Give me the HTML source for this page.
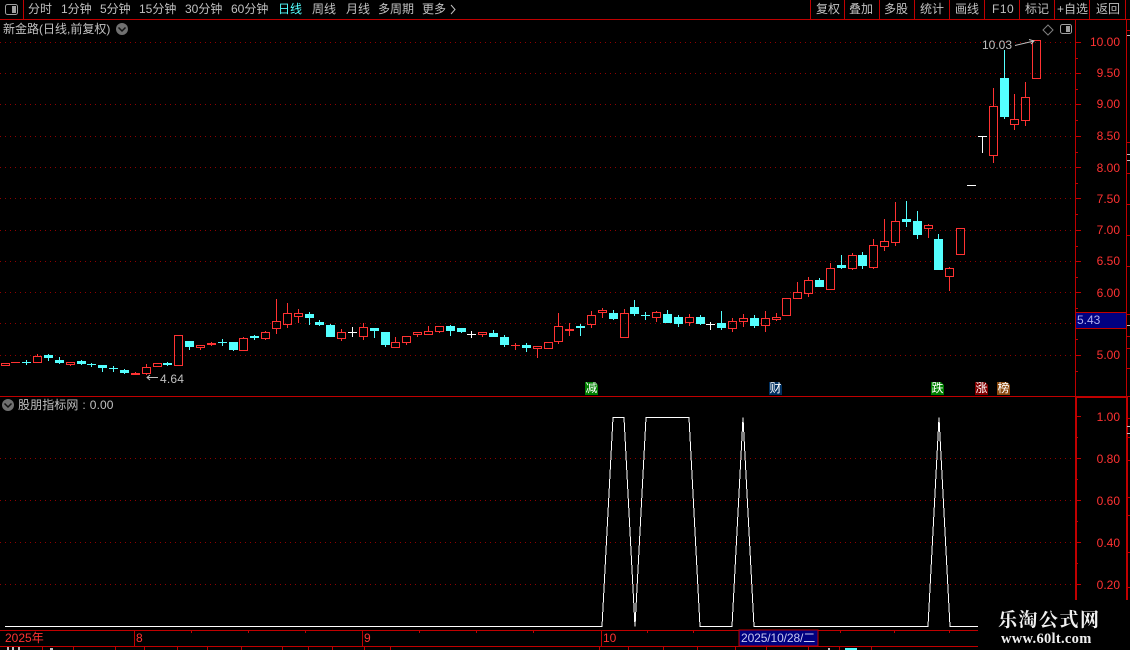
<!DOCTYPE html>
<html lang="zh">
<head>
<meta charset="utf-8">
<title>新金路</title>
<style>
html,body{margin:0;padding:0;background:#000;}
#p{position:relative;width:1130px;height:650px;overflow:hidden;background:#000;font-family:"Liberation Sans","WenQuanYi Zen Hei","Noto Sans CJK SC",sans-serif;font-size:12px;color:#c0c0c0;}
#p svg{position:absolute;left:0;top:0;}
.t{position:absolute;white-space:nowrap;line-height:14px;height:14px;}
.tb{top:2px;color:#c0c0c0;}
.y{position:absolute;left:1076px;width:44px;text-align:right;color:#ff3232;line-height:14px;}
.x{position:absolute;top:631px;color:#ff3232;line-height:14px;}
.b{position:absolute;top:382px;width:13px;height:13px;color:#fff;line-height:13px;text-align:center;font-size:12px;clip-path:polygon(0 0,10px 0,13px 3px,13px 13px,0 13px);}
</style>
</head>
<body>
<div id="p">
<svg id="s" width="1130" height="650" viewBox="0 0 1130 650" shape-rendering="crispEdges">
  <g id="grid" stroke="#900000" stroke-dasharray="1 4" fill="none">
    <path d="M0 42.5H1075M0 73.5H1075M0 104.5H1075M0 136.5H1075M0 167.5H1075M0 198.5H1075M0 230.5H1075M0 261.5H1075M0 292.5H1075M0 323.5H1075M0 355.5H1075"/>
    <path d="M0 458.5H1075M0 500.5H1075M0 542.5H1075M0 584.5H1075"/>
  </g>
  <g id="c"></g>
  <polyline fill="none" stroke="#fff" points="5,626.5 602,626.5 613,417.5 624,417.5 635,626.5 646,417.5 689,417.5 700,626.5 732,626.5 743,417.5 754,626.5 928,626.5 939,417.5 950,626.5 978,626.5"/>
  <g fill="none" stroke="#c00000">
    <path d="M0 19.5H1130"/>
    <path d="M23.5 0V19M810.5 0V19M844.5 0V19M879.5 0V19M914.5 0V19M949.5 0V19M984.5 0V19M1019.5 0V19M1054.5 0V19M1089.5 0V19M1125.5 0V19"/>
    <path d="M0 396.5H1130"/>
    <path d="M1075.5 19V396M1126.5 19V397"/>
    <path d="M1075 42.5h6M1075 73.5h6M1075 104.5h6M1075 136.5h6M1075 167.5h6M1075 198.5h6M1075 230.5h6M1075 261.5h6M1075 292.5h6M1075 355.5h6"/>
    <path d="M1075 58.5h3M1075 89.5h3M1075 120.5h3M1075 152.5h3M1075 183.5h3M1075 214.5h3M1075 246.5h3M1075 277.5h3M1075 308.5h3M1075 339.5h3M1075 371.5h3"/>
    <path d="M1127 30.5h3M1127 142.5h3M1127 173.5h3M1127 204.5h3M1127 235.5h3M1127 266.5h3M1127 314.5h3M1127 336.5h3M1127 348.5h3M1127 368.5h3M1127 418.5h3M1127 437.5h3M1127 460.5h3M1127 497.5h3M1127 515.5h3M1127 552.5h3M1127 587.5h3"/>
    <path d="M1076 397.5h50"/>
    <path d="M1075 416.5h6M1075 458.5h6M1075 500.5h6M1075 542.5h6M1075 584.5h6"/>
    <path d="M1075 437.5h3M1075 479.5h3M1075 521.5h3M1075 563.5h3"/>
    <path d="M0 630.5H978M0 646.5H978"/>
    <path d="M134.5 630V646M362.5 630V646M601.5 630V646"/>
    <path d="M191.5 630v3M248.5 630v3M305.5 630v3M419.5 630v3M476.5 630v3M533.5 630v3M647.5 630v3M693.5 630v3M840.5 630v3M894.5 630v3M949.5 630v3"/>
    <path d="M42.5 646V650M73.5 646V650M115.5 646V650M144.5 646V650M177.5 646V650M207.5 646V650M241.5 646V650M282.5 646V650M308.5 646V650M332.5 646V650M364.5 646V650M390.5 646V650M599.5 646V650M628.5 646V650M663.5 646V650M697.5 646V650M735.5 646V650M766.5 646V650M808.5 646V650M839.5 646V650M871.5 646V650"/>
  </g>
  <rect x="1075" y="397" width="2" height="203" fill="#c00000"/>
  <rect x="1126" y="397" width="2" height="203" fill="#c00000"/>
  <path d="M1127 35.5h3M1127 154.5h3M1127 160.5h3M1127 325.5h3M1127 426.5h3M1127 433.5h3" stroke="#c0c0c0" fill="none"/>
  <rect x="1076" y="312" width="50" height="17" fill="#000080"/>
  <path d="M1076 312.5h51M1076 328.5h51" stroke="#c00000" fill="none"/>
  <rect x="739" y="630" width="79" height="16" fill="#000080" stroke="#c00000"/>
  <rect x="7" y="647" width="2" height="3" fill="#c0c0c0"/>
  <rect x="12" y="647" width="2" height="3" fill="#c0c0c0"/>
  <rect x="18" y="647" width="2" height="3" fill="#c0c0c0"/>
  <rect x="50" y="648" width="3" height="2" fill="#c0c0c0"/>
  <rect x="828" y="648" width="2" height="2" fill="#c0c0c0"/>
  <rect x="845" y="648" width="12" height="2" fill="#54ffff"/>
  <g shape-rendering="auto" fill="none">
    <rect x="5.5" y="4.5" width="12" height="10" rx="2" stroke="#a0a0a0"/>
    <rect x="12" y="6" width="4" height="7" fill="#a0a0a0"/>
    <rect x="1060.5" y="24.5" width="11" height="9" rx="2" stroke="#a0a0a0"/>
    <rect x="1066" y="26" width="4" height="6" fill="#a0a0a0"/>
    <path d="M1048 25l5 5-5 5-5-5z" stroke="#808080"/>
    <path d="M451 5l4 4.500-4 4.500" stroke="#c0c0c0"/>
    <circle cx="122" cy="29" r="6" fill="#707070"/>
    <path d="M118.500 27.500l3.500 3.500 3.500-3.500" stroke="#111" stroke-width="1.500"/>
    <circle cx="8" cy="405" r="6" fill="#707070"/>
    <path d="M4.500 403.500l3.500 3.500 3.500-3.500" stroke="#111" stroke-width="1.500"/>
    <path d="M158 377.500H147M150 375l-3 2.500 3 2.500" stroke="#c0c0c0"/>
    <path d="M1015 45.500L1034 41M1029 39.500l5 1.500-3 3" stroke="#c0c0c0"/>
  </g>
</svg>

<div class="t tb" style="left:28px">分时</div>
<div class="t tb" style="left:61px">1分钟</div>
<div class="t tb" style="left:100px">5分钟</div>
<div class="t tb" style="left:139px">15分钟</div>
<div class="t tb" style="left:185px">30分钟</div>
<div class="t tb" style="left:231px">60分钟</div>
<div class="t tb" style="left:278px;color:#54ffff">日线</div>
<div class="t tb" style="left:312px">周线</div>
<div class="t tb" style="left:346px">月线</div>
<div class="t tb" style="left:378px">多周期</div>
<div class="t tb" style="left:422px">更多</div>
<div class="t tb" style="left:816px">复权</div>
<div class="t tb" style="left:849px">叠加</div>
<div class="t tb" style="left:884px">多股</div>
<div class="t tb" style="left:920px">统计</div>
<div class="t tb" style="left:955px">画线</div>
<div class="t tb" style="left:992px;letter-spacing:.5px">F10</div>
<div class="t tb" style="left:1025px">标记</div>
<div class="t tb" style="left:1057px">+自选</div>
<div class="t tb" style="left:1096px">返回</div>

<div class="t" style="left:3px;top:22px">新金路(日线,前复权)</div>
<div class="t" style="left:18px;top:398px;word-spacing:.5px;letter-spacing:.1px">股朋指标网 : 0.00</div>
<div class="t" style="left:160px;top:372px;letter-spacing:.2px">4.64</div>
<div class="t" style="left:982px;top:38px">10.03</div>

<div class="y" style="top:35px">10.00</div>
<div class="y" style="top:66px">9.50</div>
<div class="y" style="top:97px">9.00</div>
<div class="y" style="top:129px">8.50</div>
<div class="y" style="top:161px">8.00</div>
<div class="y" style="top:192px">7.50</div>
<div class="y" style="top:223px">7.00</div>
<div class="y" style="top:254px">6.50</div>
<div class="y" style="top:286px">6.00</div>
<div class="y" style="top:348px">5.00</div>
<div class="y" style="top:410px">1.00</div>
<div class="y" style="top:452px">0.80</div>
<div class="y" style="top:494px">0.60</div>
<div class="y" style="top:536px">0.40</div>
<div class="y" style="top:578px">0.20</div>
<div class="t" style="left:1077px;top:313px;color:#b0b0f0">5.43</div>

<div class="b" style="left:585px;background:#008000">减</div>
<div class="b" style="left:769px;background:#003060">财</div>
<div class="b" style="left:931px;background:#008000">跌</div>
<div class="b" style="left:975px;background:#800000">涨</div>
<div class="b" style="left:997px;background:#8b4a10">榜</div>

<div class="x" style="left:5px">2025年</div>
<div class="x" style="left:136px">8</div>
<div class="x" style="left:364px">9</div>
<div class="x" style="left:603px">10</div>
<div class="t" style="left:741px;top:631px;color:#c8c8f0;letter-spacing:-.1px">2025/10/28/二</div>

<div style="position:absolute;left:978px;top:600px;width:152px;height:50px;background:#000"></div>
<div class="t" style="left:998px;top:609px;height:20px;line-height:20px;font-size:19px;font-weight:bold;color:#f0f0f0;font-family:'Noto Serif CJK SC','Liberation Serif',serif;letter-spacing:1.500px">乐淘公式网</div>
<div class="t" style="left:1001px;top:632px;line-height:15px;font-size:14.500px;font-weight:bold;color:#f0f0f0;font-family:'Liberation Serif',serif;letter-spacing:.3px">www.60lt.com</div>
</div>
<script>
var R='#ff3232',C='#54ffff',W='#ffffff';
var g3=[
['h',220,227],['f',216,220],['c',215,217,210,224],['h',199,218,192,218],['c',195,204,192,212],['c',210,218,201,221],['h',217,224,217,227],['c',213,221,210,224],['c',222,225,218,230],['c',226,233,226,245],['c',234,236,227,245],['c',240,248,237,251],['f',250,254,246,254],['h',232,253,222,256],['h',220,232],['c',219,225,215,229],['h',136,227],['c',154,172,154,179],['h',164,173,164,179],['f',160,164,157,167],['c',156,158,147,167],['c',157,179,157,183],['h',145,184,141,184],['c',139,144,136,149],['h',127,146,123,149],['h',94,118,27,131],['h',70,105,39,113],['h',70,82,57,99],
['c',72,84,66,105],['c',96,105,90,108],['c',105,141,102,141],['h',127,146,117,152],['w',125,127,111,141],['h',111,140,99,150],['c',114,123,114,144],['c',126,165,126,171],['h',157,173,141,173],['h',139,158,139,165],['h',127,134,127,141],['h',124,134,108,134],['h',109,125,109,129],['c',108,123,105,138],['c',114,126,114,129],['w',131,133,123,144],['h',127,134,127,141],['c',129,141,120,141],['c',141,165,135,171],['f',164,166,159,180],['c',165,174,159,186],['h',169,176,169,204],['h',157,176],['h',109,155,69,162],['f',118,122,100,138],['c',108,114,102,138],['h',76,104,63,114],['h',60,68,54,84],
['c',69,87,60,90],['h',69,143,57,143],['c',51,72,30,78],['c',75,78,66,90],['h',67,83,63,96],['c',72,99,60,99],['c',81,102,75,111],['h',82,99,72,108],['c',81,102,75,105],['w',101,103,96,120],['c',99,114,63,120],['h',94,117,84,126],['h',84,95,72,111],['c',84,108,75,114],['h',85,107,63,126],['h',81,89,69,93]];
var g6=[['h',325,377],['h',307,326,277,326],['h',271,311,262,320],['c',270,291,264,291],['h',235,299,220,299],['c',225,234,195,237],['h',196,236,190,240],['c',195,228,186,237],['h',166,233,147,237],['h',154,170,87,183],['h',94,158,36,168],['c',87,96,33,111],['c',93,135,63,147],['h',106,116,102,144],['c',147,240,132,240],['h',235,260,231,303],['h',115,194]];
var g7=[['d',465,467],['T',318,320,318,369],['h',229,377,174,398],['c',144,261,60,267],['h',268,284,192,299],['h',202,272,156,288],['h',31,146]];
var o='';
function line(x,a,b,c){if(b>a)o+='<rect x="'+x+'" y="'+a+'" width="1" height="'+(b-a)+'" fill="'+c+'"/>';}
function draw(d,i,base){
  var t=d[0],bt=Math.round(base+d[1]/3),bb=Math.round(base+d[2]/3);
  var wt=Math.round(base+(d[3]===undefined?d[1]:d[3])/3),wb=Math.round(base+(d[4]===undefined?d[2]:d[4])/3);
  var x=Math.floor(5+10.86*i);
  var col=t=='h'||t=='f'?R:t=='c'?C:W;
  if(t=='h'){
    line(x,wt,bt,col);line(x,bb,wb,col);
    o+='<rect x="'+(x-3.5)+'" y="'+(bt+.5)+'" width="8" height="'+Math.max(bb-bt-1,1)+'" fill="none" stroke="'+col+'"/>';
  }else{
    line(x,wt,wb,col);
    o+='<rect x="'+(x-4)+'" y="'+bt+'" width="9" height="'+Math.max(bb-bt,1)+'" fill="'+col+'"/>';
  }
}
g3.forEach(function(d,i){draw(d,i,290);});
g6.forEach(function(d,i){draw(d,i+72,190);});
g7.forEach(function(d,i){draw(d,i+89,30);});
document.getElementById('c').innerHTML=o;
</script>
</body>
</html>
